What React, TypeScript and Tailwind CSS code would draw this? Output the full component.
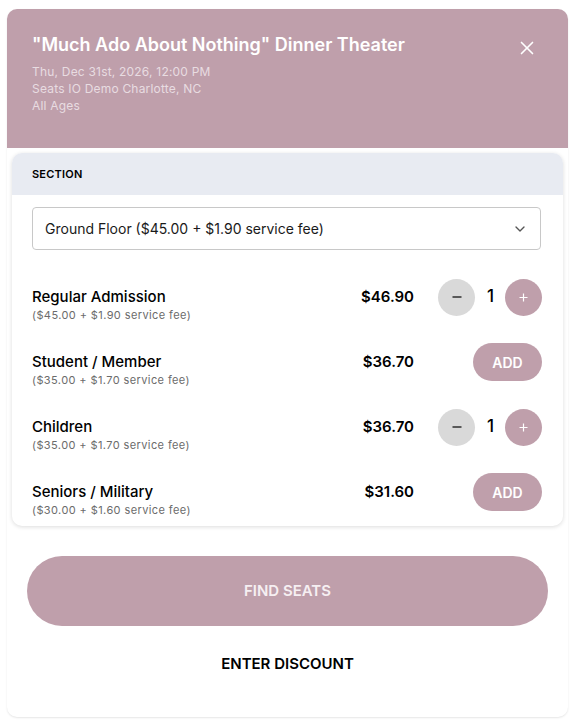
import React from "react";
import { X, ChevronDown } from "lucide-react";

type Ticket = { name: string; sub: string; price: string; qty: number };

const tickets: Ticket[] = [
  { name: "Regular Admission", sub: "($45.00 + $1.90 service fee)", price: "$46.90", qty: 1 },
  { name: "Student / Member", sub: "($35.00 + $1.70 service fee)", price: "$36.70", qty: 0 },
  { name: "Children", sub: "($35.00 + $1.70 service fee)", price: "$36.70", qty: 1 },
  { name: "Seniors / Military", sub: "($30.00 + $1.60 service fee)", price: "$31.60", qty: 0 },
];

function Row({ t }: { t: Ticket }) {
  return (
    <div className="flex items-start">
      <div className="flex-1 pt-[9px]">
        <div className="text-[15px] leading-[20px] font-medium text-black">{t.name}</div>
        <div className="text-[11px] leading-[14px] mt-[1px] text-[#6b6b6b] tracking-[0.4px]">{t.sub}</div>
      </div>
      <div className="h-[38px] flex items-center text-[15px] font-semibold text-black mr-[24px]">{t.price}</div>
      <div className="w-[104px] h-[38px] flex items-center justify-end -mr-[1px]">
        {t.qty > 0 ? (
          <div className="w-full flex items-center justify-between">
            <div className="w-[37px] h-[37px] rounded-full bg-[#d9d9d9] flex items-center justify-center">
              <svg width="10" height="10" viewBox="0 0 10 10"><path d="M0.5 5h9" stroke="#222" strokeWidth="1.4" /></svg>
            </div>
            <div className="text-[17px] font-medium text-black pl-[1px]">{t.qty}</div>
            <div className="w-[37px] h-[37px] rounded-full bg-[#bf9fab] flex items-center justify-center">
              <svg width="9" height="9" viewBox="0 0 9 9"><path d="M4.5 0.5v8M0.5 4.5h8" stroke="#fff" strokeWidth="1.2" /></svg>
            </div>
          </div>
        ) : (
          <div className="w-[69px] h-[38px] rounded-full bg-[#bf9fab] flex items-center justify-center text-[14px] font-semibold text-white">ADD</div>
        )}
      </div>
    </div>
  );
}

export default function App() {
  return (
    <div className="w-[575px] h-[728px] bg-white pt-[9px] px-[7px]" style={{ fontFamily: "Inter, 'Noto Sans', sans-serif" }}>
      <div className="h-[708px] rounded-[10px] bg-white shadow-[0_1px_2px_rgba(0,0,0,0.1)] flex flex-col">
        <div className="bg-[#bf9fab] rounded-t-[10px] h-[139px] pl-[25px] pr-[30px] pt-[25px]">
          <div className="flex items-start justify-between">
            <div className="text-[18px] leading-[22px] font-semibold text-white">"Much Ado About Nothing" Dinner Theater</div>
            <X size={22} strokeWidth={1.8} className="text-white mt-[3px]" />
          </div>
          <div className="mt-[4px] text-[12px] leading-[17px] text-[#e8dce1] tracking-[0.2px]">
            <div>Thu, Dec 31st, 2026, 12:00 PM</div>
            <div>Seats IO Demo Charlotte, NC</div>
            <div>All Ages</div>
          </div>
        </div>
        <div className="mx-[5px] mt-[5px] rounded-[10px] bg-white shadow-[0_1px_4px_rgba(0,0,0,0.14)] overflow-hidden">
          <div className="h-[42px] bg-[#e8ebf2] flex items-center pl-[20px] pt-[1px] text-[11px] font-semibold text-black tracking-[0.2px]">SECTION</div>
          <div className="pl-[20px] pr-[22px] pt-[12px] pb-[9px]">
            <div className="h-[43px] rounded-[4px] border border-[#c8c8c8] flex items-center justify-between pl-[12px] pr-[12px]">
              <span className="text-[14px] text-[#1a1a1a]">Ground Floor ($45.00 + $1.90 service fee)</span>
              <ChevronDown size={16} strokeWidth={2} className="text-[#555]" />
            </div>
            <div className="mt-[28px] flex flex-col gap-[21px]">
              {tickets.map((t, i) => (
                <Row key={i} t={t} />
              ))}
            </div>
          </div>
        </div>
        <div className="mx-[20px] mt-[30px] h-[70px] rounded-full bg-[#bf9fab] flex items-center justify-center text-[15px] font-semibold text-[#f6eff2]">FIND SEATS</div>
        <div className="mt-[28px] text-center text-[15px] leading-[20px] font-semibold text-black">ENTER DISCOUNT</div>
      </div>
    </div>
  );
}
